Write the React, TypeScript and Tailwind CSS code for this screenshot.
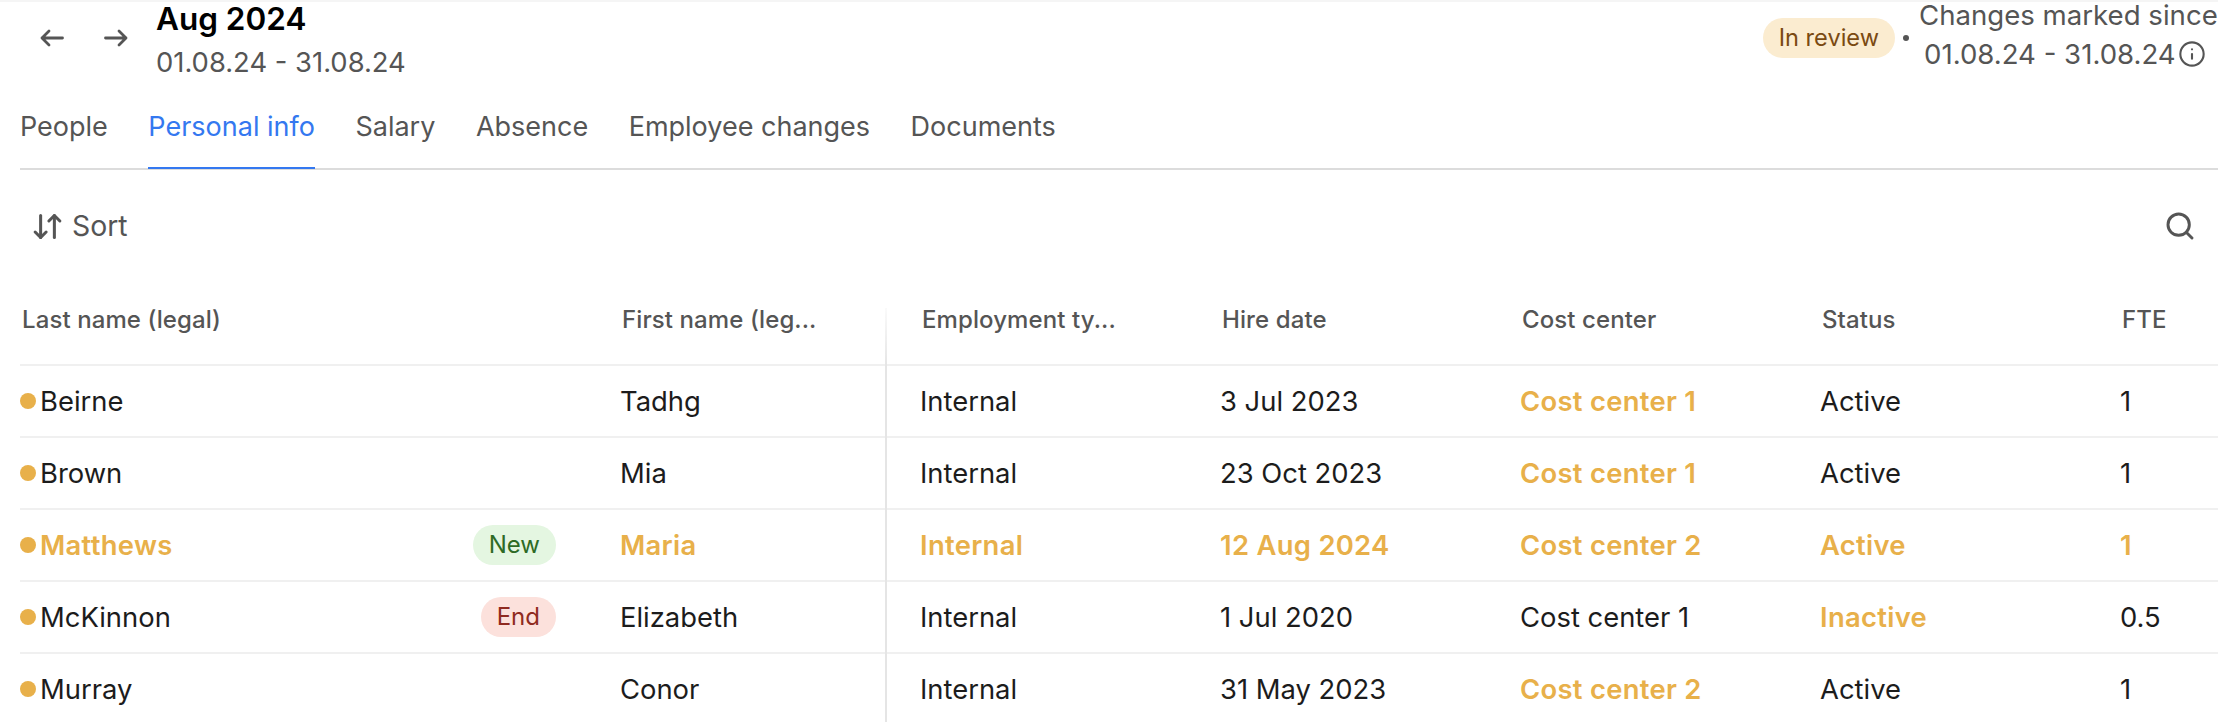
import React from 'react';
import { ArrowDownUp, Search, Info } from 'lucide-react';

const tabs = ['People', 'Personal info', 'Salary', 'Absence', 'Employee changes', 'Documents'];

type Row = {
  last: string;
  first: string;
  type: string;
  hire: string;
  cost: string;
  status: string;
  fte: string;
  badge?: 'New' | 'End';
  changed?: string[];
};

const rows: Row[] = [
  { last: 'Beirne', first: 'Tadhg', type: 'Internal', hire: '3 Jul 2023', cost: 'Cost center 1', status: 'Active', fte: '1', changed: ['cost'] },
  { last: 'Brown', first: 'Mia', type: 'Internal', hire: '23 Oct 2023', cost: 'Cost center 1', status: 'Active', fte: '1', changed: ['cost'] },
  { last: 'Matthews', first: 'Maria', type: 'Internal', hire: '12 Aug 2024', cost: 'Cost center 2', status: 'Active', fte: '1', badge: 'New', changed: ['last', 'first', 'type', 'hire', 'cost', 'status', 'fte'] },
  { last: 'McKinnon', first: 'Elizabeth', type: 'Internal', hire: '1 Jul 2020', cost: 'Cost center 1', status: 'Inactive', fte: '0.5', badge: 'End', changed: ['status'] },
  { last: 'Murray', first: 'Conor', type: 'Internal', hire: '31 May 2023', cost: 'Cost center 2', status: 'Active', fte: '1', changed: ['cost'] },
];

const gridCols = 'grid grid-cols-[601px_266px_333px_300px_300px_300px_1fr]';

function Cell({ row, field, value }: { row: Row; field: string; value: string }) {
  const on = row.changed?.includes(field);
  return <span className={on ? 'font-semibold tracking-[0.3px] text-[#e8b04a]' : 'text-[#1c1c1c]'}>{value}</span>;
}

export default function App() {
  return (
    <div className="h-[722px] overflow-hidden bg-white border-t-2 border-[#f5f5f5] font-['Inter',sans-serif] text-[27.4px] leading-[32px]">
      <div className="flex justify-between h-[84px]">
        <div className="flex items-start">
          <button className="mt-[27px] ml-[40px] text-[#555]">
            <svg width="24" height="18" viewBox="0 0 24 18" fill="none" stroke="currentColor" strokeWidth="2.8" strokeLinecap="round" strokeLinejoin="round">
              <path d="M2 9h20.5M9 2 2 9l7 7" />
            </svg>
          </button>
          <button className="mt-[27px] ml-[40px] text-[#555]">
            <svg width="24" height="18" viewBox="0 0 24 18" fill="none" stroke="currentColor" strokeWidth="2.8" strokeLinecap="round" strokeLinejoin="round">
              <path d="M1.5 9H22M15 2l7 7-7 7" />
            </svg>
          </button>
          <div className="ml-[28px]">
            <div className="-mt-[1px] text-[31.5px] leading-[36px] font-semibold text-black">Aug 2024</div>
            <div className="mt-[9px] text-[27.4px] text-[#555]">01.08.24 - 31.08.24</div>
          </div>
        </div>
        <div className="flex items-start">
          <span className="mt-[16px] h-[40px] px-[16px] rounded-full bg-[#fbecd0] text-[#7a4a12] text-[23.6px] leading-[40px]">In review</span>
          <span className="mt-[33px] ml-[8px] w-[6px] h-[6px] rounded-full bg-[#555]" />
          <div className="ml-[10px] text-[#555]">
            <div className="w-[299px] whitespace-nowrap text-[27.6px] leading-[26px]">Changes marked since</div>
            <div className="mt-[10px] pl-[5px] flex items-center gap-[2px] text-[27.6px]">
              01.08.24 - 31.08.24
              <Info size={28} strokeWidth={1.8} />
            </div>
          </div>
        </div>
      </div>

      <div className="ml-[20px] flex gap-[40.5px] h-[84px] border-b-2 border-[#dcdcdc] pt-[25px] text-[27px]">
        {tabs.map((t) => (
          <div key={t} className={t === 'Personal info' ? 'h-[58px] border-b-2 border-[#3478f0] text-[#3478f0]' : 'h-[58px] text-[#555]'}>
            {t}
          </div>
        ))}
      </div>

      <div className="flex items-center justify-between h-[112px] pl-[31px] pr-[17px] text-[#555]">
        <div className="flex items-center gap-[8px] text-[28.4px]">
          <ArrowDownUp size={33} strokeWidth={2.2} />
          Sort
        </div>
        <Search size={32} strokeWidth={2.2} className="mr-[5px]" />
      </div>

      <div className="pl-[20px]">
        <div className={`${gridCols} h-[84px] border-b-2 border-[#f0f0f0] text-[24px] font-[450] tracking-[0.1px] text-[#555]`}>
          <span className="pl-[2px] pt-[22px]">Last name (legal)</span>
          <span className="relative pl-[1px] pt-[22px]">
            First name (leg...
            <span className="absolute right-0 top-[26px] -bottom-[2px] w-[2px] bg-linear-to-b from-[#fafafa] to-[#e5e5e5]" />
          </span>
          <span className="pl-[35px] pt-[22px]">Employment ty...</span>
          <span className="pl-[2px] pt-[22px]">Hire date</span>
          <span className="pl-[2px] pt-[22px]">Cost center</span>
          <span className="pl-[2px] pt-[22px]">Status</span>
          <span className="pl-[2px] pt-[22px]">FTE</span>
        </div>
        {rows.map((r) => (
          <div key={r.last} className={`${gridCols} h-[72px] border-b-2 border-[#f0f0f0] items-stretch`}>
            <div className="flex items-center">
              <span className="w-[16px] h-[16px] rounded-full bg-[#e8b04a] mr-[4px]" />
              <Cell row={r} field="last" value={r.last} />
              {r.badge === 'New' && (
                <span className="ml-auto mr-[65px] h-[40px] px-[16px] rounded-full bg-[#e4f6e1] text-[#2e6b25] text-[24px] leading-[40px]">New</span>
              )}
              {r.badge === 'End' && (
                <span className="ml-auto mr-[65px] h-[40px] px-[16px] rounded-full bg-[#fce1dc] text-[#8f2a20] text-[24px] leading-[40px]">End</span>
              )}
            </div>
            <div className="relative flex items-center -ml-[1px]">
              <Cell row={r} field="first" value={r.first} />
              <span className="absolute right-0 top-0 -bottom-[2px] w-[2px] bg-[#e5e5e5]" />
            </div>
            <div className="flex items-center pl-[33px]">
              <Cell row={r} field="type" value={r.type} />
            </div>
            <div className="flex items-center">
              <Cell row={r} field="hire" value={r.hire} />
            </div>
            <div className="flex items-center">
              <Cell row={r} field="cost" value={r.cost} />
            </div>
            <div className="flex items-center">
              <Cell row={r} field="status" value={r.status} />
            </div>
            <div className="flex items-center">
              <Cell row={r} field="fte" value={r.fte} />
            </div>
          </div>
        ))}
      </div>
    </div>
  );
}
